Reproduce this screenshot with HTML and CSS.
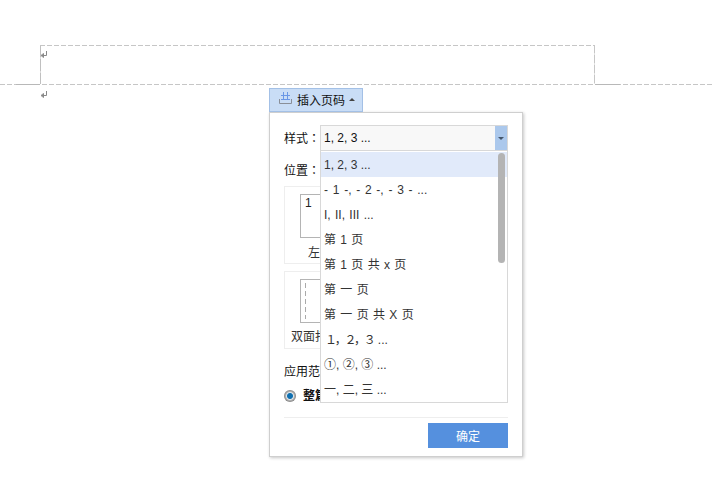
FILE: index.html
```html
<!DOCTYPE html>
<html lang="zh">
<head>
<meta charset="utf-8">
<title>插入页码</title>
<link rel="stylesheet" href="styles.css">
</head>
<body>
<div class="doc">
  <div class="header-box">
    <svg class="ret" width="8" height="8" viewBox="0 0 8 8"><path d="M6.500 0v4.500H1.500M3.500 2.500L1 4.500l2.500 2z" fill="none" stroke="#888" stroke-width="1"/></svg>
  </div>
  <div class="header-rule"></div>
  <svg class="ret ret-body" width="8" height="8" viewBox="0 0 8 8"><path d="M6.500 0v4.500H1.500M3.500 2.500L1 4.500l2.500 2z" fill="none" stroke="#888" stroke-width="1"/></svg>

  <div class="popup">
    <div class="tab">
      <svg class="tab-icon" width="14" height="13" viewBox="0 0 14 13">
        <path d="M4.500 0v7M8.500 0v7M2 3.500h9M2 7.500h9" fill="none" stroke="#6a97e6"/>
        <path d="M.5 7v4.500h12V7" fill="none" stroke="#8a8f98"/>
      </svg>
      <span>插入页码</span>
      <i class="tab-caret"></i>
    </div>
    <div class="panel">
      <div class="row">
        <span class="label row-label">样式<span class="colon" lang="zh-TW">：</span></span>
        <div class="select">
          <span class="select-value">1, 2, 3 ...</span>
          <span class="select-btn"><i></i></span>
        </div>
      </div>
      <div class="label pos-label">位置<span class="colon" lang="zh-TW">：</span></div>
      <div class="card">
        <div class="sheet"><span>1</span></div>
        <div class="card-text">左侧</div>
      </div>
      <div class="card card-two">
        <div class="sheet"><i class="dash"></i></div>
        <div class="card-text">双面打印</div>
      </div>
      <div class="label scope-label">应用范围<span class="colon" lang="zh-TW">：</span></div>
      <div class="radio-row">
        <span class="radio"></span>
        <b>整篇文档</b>
      </div>
      <div class="footer">
        <button class="ok" type="button">确定</button>
      </div>

      <div class="dropdown">
        <ul class="list">
          <li class="on">1, 2, 3 ...</li>
          <li class="w2">- 1 -, - 2 -, - 3 - ...</li>
          <li class="w1">I, II, III ...</li>
          <li class="w1">第 1 页</li>
          <li class="w1">第 1 页 共 x 页</li>
          <li class="w1">第 一 页</li>
          <li class="w1">第 一 页 共 X 页</li>
          <li class="full"><span class="fw">１，２，３</span> ...</li>
          <li>①, ②, ③ ...</li>
          <li>一, 二, 三 ...</li>
        </ul>
        <div class="thumb"></div>
      </div>
    </div>
  </div>
</div>
</body>
</html>
```

FILE: styles.css
```css
* { box-sizing: border-box; }
html, body { margin: 0; background: #fff; }
body {
  width: 712px;
  height: 492px;
  overflow: hidden;
  font-family: "Liberation Sans", "Noto Sans CJK SC", sans-serif;
  font-size: 12px;
  color: #222;
}
.doc { position: relative; height: 492px; padding-top: 45px; }
.header-box {
  width: 555px;
  height: 39px;
  margin-left: 40px;
  padding: 6px 0 0 0;
  background:
    repeating-linear-gradient(90deg, #c6c6c6 0 5px, transparent 5px 7px) top left / 100% 1px no-repeat,
    repeating-linear-gradient(180deg, #c0c0c0 0 12px, #dadada 12px 14px) top left / 1px 100% no-repeat,
    repeating-linear-gradient(180deg, #c6c6c6 0 8px, #e2e2e2 8px 10px) top right / 1px 100% no-repeat;
}
.header-rule {
  height: 1px;
  background:
    linear-gradient(90deg, transparent 16px, #b8b8b8 16px 40px, transparent 40px 595px, #b8b8b8 595px 620px, transparent 620px),
    repeating-linear-gradient(90deg, #c6c6c6 0 5px, transparent 5px 7px);
}
.ret { display: block; }
.ret-body { margin: 6px 0 0 40px; }

.popup { position: absolute; left: 269px; top: 88px; }
.tab {
  display: flex;
  align-items: center;
  width: 94px;
  height: 24px;
  padding: 0 0 2px 9px;
  background: #c9ddf6;
  border: 1px solid #a3c0e6;
  color: #111;
  position: relative;
  z-index: 1;
}
.tab-icon { align-self: flex-start; margin: 3px 4px 0 0; }
.tab-caret {
  width: 0;
  height: 0;
  margin-left: 4px;
  border: 3px solid transparent;
  border-top: 0;
  border-bottom: 3px solid #444;
}
.panel {
  position: relative;
  width: 254px;
  height: 345px;
  padding: 12px 14px 0;
  background: #fff;
  border: 1px solid #cfcfcf;
  box-shadow: 1px 1px 3px rgba(0, 0, 0, .22);
}
.row { display: flex; align-items: center; height: 27px; }
.label { color: #111; white-space: nowrap; }
.colon { font-family: "Noto Sans CJK TC", sans-serif; line-height: 1; }
.row-label { width: 36px; flex: none; margin-top: -2px; }
.select {
  display: flex;
  flex: 1;
  height: 27px;
  background: #f8f8f8;
  border: 1px solid #d8d8d8;
  border-bottom-width: 2px;
  line-height: 24px;
}
.select-value { flex: 1; padding-left: 3px; color: #111; }
.select-btn {
  width: 12px;
  display: flex;
  align-items: center;
  justify-content: center;
  background: #abc8ec;
}
.select-btn i {
  width: 0;
  height: 0;
  border: 3px solid transparent;
  border-bottom: 0;
  border-top: 3px solid #44566c;
}
.pos-label { margin-top: 9px; height: 18px; line-height: 20px; }
.card {
  width: 130px;
  height: 78px;
  margin-top: 7px;
  padding-top: 7px;
  border: 1px solid #eee;
}
.sheet {
  position: relative;
  width: 60px;
  height: 44px;
  margin-left: 15px;
  padding: 1px 0 0 4px;
  border: 1px solid #b4b4b4;
  color: #222;
  line-height: 15px;
}
.dash {
  display: block;
  width: 1px;
  height: 36px;
  margin-top: 2px;
  background: repeating-linear-gradient(180deg, #aaa 0 5px, transparent 5px 8px);
}
.card-text { margin-top: 8px; padding-left: 23px; color: #333; line-height: 15px; }
.card-two .card-text { margin-top: 7px; padding-left: 6px; }
.scope-label { margin-top: 14px; height: 16px; line-height: 18px; }
.radio-row { display: flex; align-items: center; gap: 7px; margin-top: 9px; height: 16px; line-height: 16px; color: #111; }
.radio {
  width: 12px;
  height: 12px;
  border-radius: 50%;
  background: radial-gradient(circle, #0f6fb0 0 2.500px, #dfe6ea 3.500px, #b0b0b0 4.500px, #7f7f7f 6px);
}
.footer {
  position: absolute;
  left: 14px;
  right: 14px;
  top: 304px;
  height: 32px;
  padding-top: 5px;
  border-top: 1px solid #eeeeee;
  display: flex;
  justify-content: flex-end;
}
.ok {
  width: 80px;
  height: 25px;
  padding: 0;
  border: 0;
  background: #5590de;
  color: #fff;
  font: inherit;
}
.dropdown {
  position: absolute;
  left: 50px;
  top: 38px;
  width: 188px;
  height: 252px;
  background: #fff;
  border: 1px solid #d8d8d8;
  border-top: 0;
  overflow: hidden;
}
.list { margin: 1px 0 0; padding: 0; list-style: none; }
.list li {
  height: 25px;
  padding: 1px 0 0 3px;
  line-height: 25px;
  color: #333;
  white-space: nowrap;
}
.list li.on { background: #e1eafa; }
.list li.w1 { word-spacing: 1px; }
.list li.w2 { word-spacing: 1.400px; }
.list li.full { padding-left: 4px; }
.fw { display: inline-block; letter-spacing: -2.300px; margin-right: 1px; }
.thumb {
  position: absolute;
  top: 2px;
  right: 2px;
  width: 7px;
  height: 110px;
  border-radius: 4px;
  background: #b4b4b4;
}
```
